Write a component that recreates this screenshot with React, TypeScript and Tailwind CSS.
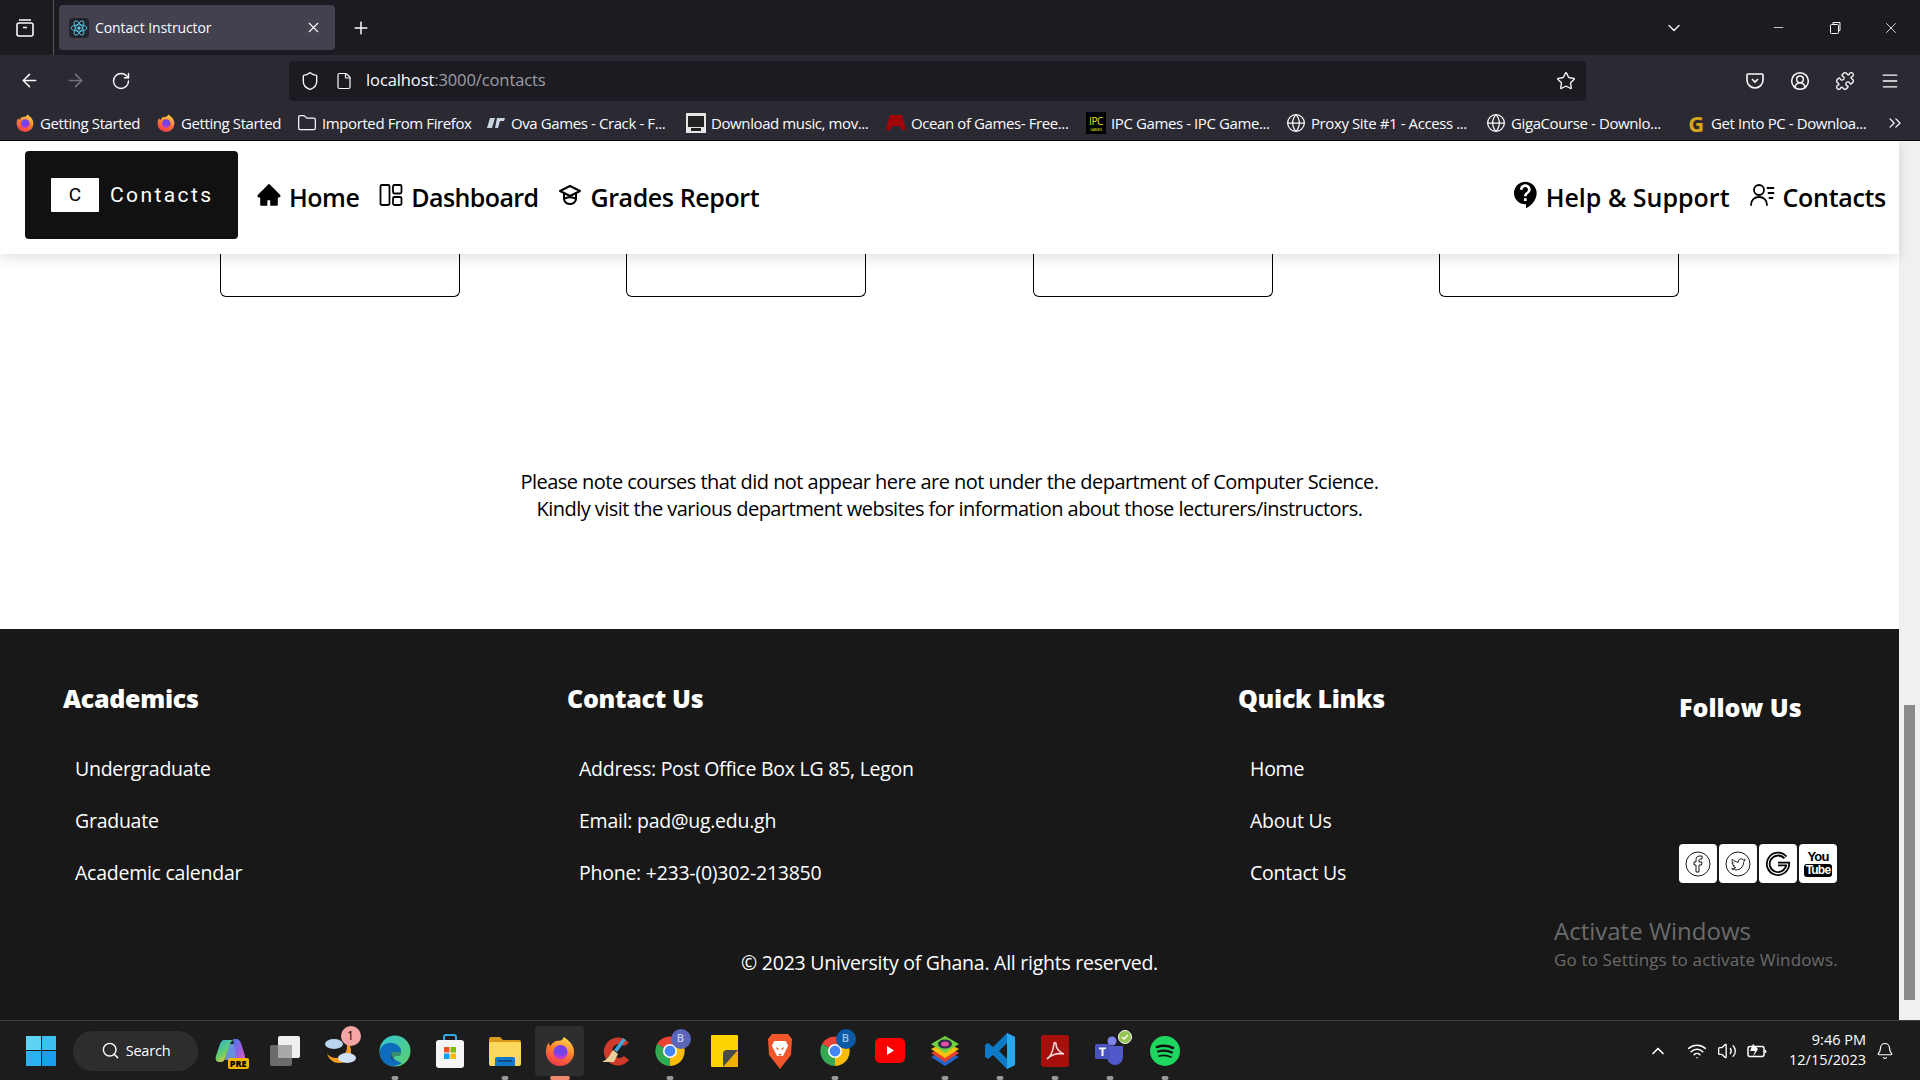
import type { ReactNode } from "react"
import { ArrowLeft, ArrowRight, RotateCw, Shield, File, Star, X, Plus, ChevronDown, Minus, Menu, Folder, Globe, ChevronsRight, Search, ChevronUp, Wifi, Volume2, Bell, Puzzle, CircleUserRound } from "lucide-react"
import { MdContactSupport } from "react-icons/md"
import { AiFillHome } from "react-icons/ai"

const UI_FONT = "font-['Open_Sans',sans-serif]"

function FirefoxIcon({ size = 18 }: { size?: number }) {
  return (
    <svg width={size} height={size} viewBox="0 0 32 32" className="shrink-0">
      <defs>
        <linearGradient id="ffx" x1="0.7" y1="0" x2="0.3" y2="1">
          <stop offset="0" stopColor="#ffd54a" />
          <stop offset="0.5" stopColor="#ff7a2f" />
          <stop offset="1" stopColor="#f0364f" />
        </linearGradient>
      </defs>
      <path d="M20 1c7 4 11 10 11 16a15 15 0 0 1-30 0c0-4 1-7 3-10 0 2 1 3 2 4 1-4 5-6 9-6 2 0 4-1 5-4z" fill="url(#ffx)" />
      <circle cx="16.500" cy="17" r="7.500" fill="#7542e5" />
      <path d="M9 17a7.500 7.500 0 0 0 15 0c-1 3-4 4-7 4s-6-1-8-4z" fill="#c13bd3" />
    </svg>
  )
}

function ReactFavicon() {
  return (
    <svg width="20" height="20" viewBox="0 0 20 20" className="rounded-sm bg-[#20232a]">
      <g fill="none" stroke="#61dafb" strokeWidth="0.8">
        <ellipse cx="10" cy="10" rx="8" ry="3.200" />
        <ellipse cx="10" cy="10" rx="8" ry="3.200" transform="rotate(60 10 10)" />
        <ellipse cx="10" cy="10" rx="8" ry="3.200" transform="rotate(120 10 10)" />
      </g>
      <circle cx="10" cy="10" r="1.600" fill="#61dafb" />
    </svg>
  )
}

function BrowserChrome() {
  const bookmarks: { icon: ReactNode; label: string; cls: string }[] = [
    { icon: <FirefoxIcon />, label: "Getting Started", cls: "w-[141px]" },
    { icon: <FirefoxIcon />, label: "Getting Started", cls: "w-[141px]" },
    { icon: <Folder size={20} strokeWidth={1.5} />, label: "Imported From Firefox", cls: "w-[189px]" },
    {
      icon: (
        <svg width="18" height="10" viewBox="0 0 18 10">
          <path d="M3 0h5L5 10H0zM10 0h8l-1 3h-4l-2 7H8z" fill="#cbd5e1" />
        </svg>
      ),
      label: "Ova Games - Crack - F...",
      cls: "w-[200px]",
    },
    {
      icon: (
        <svg width="20" height="20" viewBox="0 0 20 20">
          <rect width="20" height="20" fill="#e5e5e5" />
          <rect x="2" y="3" width="16" height="11" fill="#222" />
          <rect x="5" y="15" width="10" height="3" fill="#222" />
        </svg>
      ),
      label: "Download music, mov...",
      cls: "w-[200px]",
    },
    {
      icon: (
        <svg width="20" height="16" viewBox="0 0 20 16">
          <path d="M4 0h12l4 14-3 2-4-5H7l-4 5-3-2z" fill="#a1050c" />
        </svg>
      ),
      label: "Ocean of Games- Free...",
      cls: "w-[200px]",
    },
    {
      icon: (
        <div className="flex h-[22px] w-[20px] flex-col items-center justify-center bg-black text-[#e6e600]">
          <span className="text-[10px] leading-[12px]">IPC</span>
          <span className="text-[4px] leading-[5px]">GAMES</span>
        </div>
      ),
      label: "IPC Games - IPC Game...",
      cls: "w-[200px]",
    },
    { icon: <Globe size={20} strokeWidth={1.5} />, label: "Proxy Site #1 - Access ...", cls: "w-[200px]" },
    { icon: <Globe size={20} strokeWidth={1.5} />, label: "GigaCourse - Downlo...", cls: "w-[200px]" },
    { icon: <span className="text-[22px] font-bold leading-none text-[#d9a21b]">G</span>, label: "Get Into PC - Downloa...", cls: "w-[186px]" },
  ]

  return (
    <div className={`${UI_FONT} shrink-0 text-[#fbfbfe]`}>
      {/* tab strip */}
      <div className="flex h-[55px] items-center bg-[#1c1b22]">
        <div className="flex h-full w-[54px] items-center justify-center border-r border-[#55545c] pr-[4px]">
          <svg width="20" height="20" viewBox="0 0 20 20" fill="none" stroke="#fbfbfe" strokeWidth="1.600">
            <rect x="2" y="5" width="16" height="13" rx="2" />
            <path d="M4 2h12M8 9.500h4" />
          </svg>
        </div>
        <div className="ml-[5px] flex h-[45px] w-[276px] items-center rounded-[4px] bg-[#42414d] pl-[10px] pr-[13px]">
          <ReactFavicon />
          <span className="ml-[6px] flex-1 text-[14px] tracking-[-0.1px]">Contact Instructor</span>
          <X size={17} strokeWidth={1.5} />
        </div>
        <Plus size={20} strokeWidth={1.8} className="ml-[16px]" />
        <ChevronDown size={20} strokeWidth={1.5} className="ml-auto mr-[87px]" />
        <Minus size={15} strokeWidth={1.2} className="mr-[42px]" />
        <svg width="14" height="14" viewBox="0 0 14 14" fill="none" stroke="#fbfbfe" className="mr-[40px]">
          <rect x="2.500" y="3.500" width="8" height="9" rx="1" />
          <path d="M5 3.500V1.500h7v8h-1.500" />
        </svg>
        <X size={18} strokeWidth={1.1} className="mr-[20px]" />
      </div>
      {/* toolbar */}
      <div className="flex h-[50px] items-center bg-[#2b2a33] pt-[1px]">
        <div className="flex w-[289px] items-center pl-[19px]">
          <ArrowLeft size={21} strokeWidth={1.7} />
          <ArrowRight size={21} strokeWidth={1.7} className="ml-[25px] text-[#75747c]" />
          <RotateCw size={20} strokeWidth={1.7} className="ml-[25px]" />
        </div>
        <div className="flex h-[40px] w-[1297px] items-center rounded-[4px] bg-[#1c1b22] pl-[11px] pr-[10px]">
          <Shield size={20} strokeWidth={1.6} />
          <File size={18} strokeWidth={1.6} className="ml-[15px]" />
          <span className="ml-[13px] text-[16.500px] tracking-[-0.1px]">
            localhost<span className="text-[#9e9ea3]">:3000/contacts</span>
          </span>
          <Star size={20} strokeWidth={1.6} className="ml-auto" />
        </div>
        <div className="flex flex-1 items-center justify-end gap-[25px] pr-[20px]">
          <svg width="20" height="20" viewBox="0 0 20 20" fill="none" stroke="#fbfbfe" strokeWidth="1.600">
            <path d="M3 3h14a1 1 0 0 1 1 1v5a8 8 0 0 1-16 0V4a1 1 0 0 1 1-1z" />
            <path d="M7 8l3 3 3-3" />
          </svg>
          <CircleUserRound size={20} strokeWidth={1.8} />
          <Puzzle size={20} strokeWidth={1.6} />
          <Menu size={20} strokeWidth={1.6} />
        </div>
      </div>
      {/* bookmarks */}
      <div className="flex h-[35px] items-center bg-[#2b2a33] pl-[15px] pt-[1px] text-[15px] tracking-[-0.4px]">
        {bookmarks.map((b, i) => (
          <div key={i} className={`flex items-center gap-[5px] whitespace-nowrap ${b.cls}`}>
            <span className="flex w-[20px] justify-center">{b.icon}</span>
            <span>{b.label}</span>
          </div>
        ))}
        <ChevronsRight size={20} strokeWidth={1.5} className="ml-auto mr-[15px]" />
      </div>
    </div>
  )
}

function NavItem({ icon, label, cls }: { icon: ReactNode; label: string; cls?: string }) {
  return (
    <a className={`flex items-center text-[25px] font-semibold text-black ${cls ?? ""}`}>
      <span className="mb-[6px] mr-[8px] flex w-[24px] shrink-0 justify-center">{icon}</span>
      {label}
    </a>
  )
}

function Navbar() {
  return (
    <nav className="relative z-10 flex h-[113px] shrink-0 items-center bg-white pl-[25px] pr-[13px] pt-[1px] shadow-[0_4px_12px_rgba(0,0,0,0.12)]">
      <div className="mb-[6px] flex h-[88px] w-[213px] items-start rounded-[4px] bg-[#111111] pl-[26px] pt-[27px]">
        <div className="flex h-[34px] w-[48px] items-center justify-center rounded-[1px] bg-white font-['Roboto',sans-serif] text-[19px] text-black">C</div>
        <span className="ml-[11px] font-['Roboto',sans-serif] text-[21px] leading-[34px] tracking-[2.400px] text-white">Contacts</span>
      </div>
      <div className="ml-[19px] flex items-center gap-[20px]">
        <NavItem icon={<AiFillHome size={26} className="shrink-0" />} label="Home" cls="tracking-[-0.5px]" />
        <NavItem
          icon={
            <svg width="24" height="24" viewBox="0 0 24 24" fill="none" stroke="black" strokeWidth="1.800" className="shrink-0">
              <rect x="1.500" y="2" width="9" height="20" rx="1.500" />
              <rect x="14" y="2" width="8.500" height="8.500" rx="1.500" />
              <rect x="14" y="14" width="8.500" height="8" rx="1.500" />
            </svg>
          }
          label="Dashboard"
          cls="tracking-[-0.6px]"
        />
        <NavItem
          icon={
            <svg width="24" height="24" viewBox="0 0 24 24" fill="none" stroke="black" strokeWidth="2" strokeLinejoin="round" className="shrink-0">
              <path d="M12 3L2 8l10 5 10-5z" />
              <path d="M6 10.500V16c0 3 3 5 6 5s6-2 6-5v-5.500" />
              <path d="M7 15.500c3-1.500 7-1.500 10 0" />
            </svg>
          }
          label="Grades Report"
          cls="tracking-[-0.4px]"
        />
      </div>
      <div className="ml-auto flex items-center gap-[21px]">
        <NavItem icon={<MdContactSupport size={32} className="shrink-0" />} label="Help & Support" />
        <NavItem
          icon={
            <svg width="25" height="25" viewBox="0 0 25 25" fill="none" stroke="black" strokeWidth="1.800" strokeLinecap="round" className="shrink-0">
              <circle cx="9" cy="7" r="5" />
              <path d="M1 22c0-5 3.500-8 8-8s8 3 8 8" />
              <path d="M17.500 5h6M18.500 10h5M19.500 15h3" />
            </svg>
          }
          label="Contacts"
          cls="tracking-[-0.3px]"
        />
      </div>
    </nav>
  )
}

function FooterColumn({ title, items }: { title: string; items: string[] }) {
  return (
    <div>
      <h3 className="text-[25px] font-extrabold leading-[32px] tracking-[-0.3px] text-white">{title}</h3>
      <ul className="mt-[41px] flex flex-col gap-[24px] pl-[12px]">
        {items.map((item) => (
          <li key={item} className="text-[19.500px] leading-[28px] tracking-[-0.250px] text-white">
            {item}
          </li>
        ))}
      </ul>
    </div>
  )
}

function SocialBox({ children }: { children: ReactNode }) {
  return <div className="flex h-[39px] w-[38px] items-center justify-center rounded-[4px] bg-white text-black">{children}</div>
}

function Footer() {
  return (
    <footer className="relative h-[391px] shrink-0 bg-[#181818] pl-[63px] pt-[53px]">
      <div className="grid grid-cols-[504px_671px_441px_auto]">
        <FooterColumn title="Academics" items={["Undergraduate", "Graduate", "Academic calendar"]} />
        <FooterColumn title="Contact Us" items={["Address: Post Office Box LG 85, Legon", "Email: pad@ug.edu.gh", "Phone: +233-(0)302-213850"]} />
        <FooterColumn title="Quick Links" items={["Home", "About Us", "Contact Us"]} />
        <div className="pt-[9px]">
          <h3 className="text-[25px] font-extrabold leading-[32px] text-white">Follow Us</h3>
          <div className="mt-[121px] flex gap-[2px]">
            <SocialBox>
              <svg width="26" height="26" viewBox="0 0 26 26" fill="none" stroke="black" strokeWidth="0.900">
                <circle cx="13" cy="13" r="12" />
                <path d="M11 21v-7H9v-3h2V9c0-2.500 1-4 3.500-4H17v3h-1.500c-1 0-1.500.5-1.500 1.500V11h3l-.5 3H14v7z" />
              </svg>
            </SocialBox>
            <SocialBox>
              <svg width="26" height="26" viewBox="0 0 26 26" fill="none" stroke="black" strokeWidth="0.900">
                <circle cx="13" cy="13" r="12" />
                <path d="M20 8.500c-.6.300-1.200.400-1.800.500-.6-.9-1.600-1.300-2.700-1.100-1.500.3-2.400 1.800-2.100 3.300-2.400-.1-4.500-1.200-5.900-3-.8 1.300-.4 3 .9 3.900-.5 0-.9-.1-1.300-.4 0 1.400 1 2.600 2.300 2.900-.4.100-.9.100-1.300 0 .4 1.200 1.500 2 2.700 2-1.200.9-2.700 1.300-4.100 1.100 4.800 3 11.300.5 12-6.100 0-.3 0-.5 0-.7.500-.4.900-1 1.300-1.900z" />
              </svg>
            </SocialBox>
            <SocialBox>
              <svg width="26" height="26" viewBox="0 0 28 28" fill="none" strokeLinecap="butt">
                <path d="M22 7a10.500 10.500 0 1 0 2.500 7H14" stroke="black" strokeWidth="5" />
                <path d="M22 7a10.500 10.500 0 1 0 2.500 7H14" stroke="white" strokeWidth="1.200" />
              </svg>
            </SocialBox>
            <SocialBox>
              <div className="flex flex-col items-center font-['Liberation_Sans',sans-serif] font-bold">
                <span className="text-[13px] leading-[13px] tracking-[-0.8px] text-black">You</span>
                <span className="mt-[1px] rounded-[3px] bg-black px-[2px] text-[12px] leading-[13px] tracking-[-0.8px] text-white">Tube</span>
              </div>
            </SocialBox>
          </div>
        </div>
      </div>
      <p className="mt-[62px] pr-[63px] text-center text-[19.500px] leading-[28px] tracking-[-0.250px] text-white">© 2023 University of Ghana. All rights reserved.</p>
      {/* watermark sits over the footer */}
      <div className="absolute left-[1554px] top-[286px] text-[#6b6b6b]">
        <div className="text-[24px] leading-[32px]">Activate Windows</div>
        <div className="mt-[2px] text-[17px] leading-[22px] tracking-[0.15px]">Go to Settings to activate Windows.</div>
      </div>
    </footer>
  )
}

function Card() {
  return <div className="h-[43px] w-[240px] rounded-b-[6px] border border-t-0 border-black" />
}

function TaskIcon({ children, dot, active }: { children: ReactNode; dot?: boolean; active?: boolean }) {
  return (
    <div className="relative flex h-[60px] w-[55px] items-center justify-center">
      {active && <div className="absolute inset-x-[3px] top-[5px] h-[50px] rounded-[4px] bg-[#2e2e2e]" />}
      <div className="relative">{children}</div>
      {dot && <div className="absolute bottom-[1px] left-1/2 h-[4px] w-[7px] -translate-x-1/2 rounded-full bg-[#9a9a9a]" />}
      {active && <div className="absolute bottom-[1px] left-1/2 h-[4px] w-[20px] -translate-x-1/2 rounded-full bg-[#f08a6e]" />}
    </div>
  )
}

function ChromeIcon({ badge }: { badge: string }) {
  return (
    <div className="relative">
      <svg width="30" height="30" viewBox="0 0 30 30">
        <path d="M15 15L2 8A15 15 0 0 1 28 8z" fill="#ea4335" />
        <path d="M15 15L2 8A15 15 0 0 0 15 30z" fill="#34a853" />
        <path d="M15 15L28 8A15 15 0 0 1 15 30z" fill="#fbbc05" />
        <circle cx="15" cy="15" r="7" fill="white" />
        <circle cx="15" cy="15" r="5.400" fill="#4285f4" />
      </svg>
      <div className={`absolute -right-[6px] -top-[7px] flex h-[20px] w-[20px] items-center justify-center rounded-full text-[11px] font-semibold ${badge}`}>B</div>
    </div>
  )
}

function Taskbar() {
  return (
    <div className={`${UI_FONT} flex h-[60px] shrink-0 items-center border-t border-[#3d3d3d] bg-[#1c1c1c] text-white`}>
      <div className="ml-[26px] grid h-[30px] w-[30px] grid-cols-2 gap-[1px]">
        <div className="bg-[#5fd3f5]" />
        <div className="bg-[#3cc0f2]" />
        <div className="bg-[#2bb2f0]" />
        <div className="bg-[#1a9ff0]" />
      </div>
      <div className="ml-[17px] flex h-[40px] w-[125px] items-center justify-center gap-[6px] rounded-full bg-[#2d2d2d] text-[14.500px] tracking-[-0.2px]">
        <Search size={19} strokeWidth={1.8} />
        Search
      </div>
      <div className="ml-[4px] flex">
        <TaskIcon>
          <div className="relative">
            <svg width="30" height="26" viewBox="0 0 30 26">
              <defs>
                <linearGradient id="cpl" x1="0" y1="0" x2="0.6" y2="1">
                  <stop offset="0" stopColor="#2fb0e8" />
                  <stop offset="0.6" stopColor="#5fcf6a" />
                  <stop offset="1" stopColor="#f4c542" />
                </linearGradient>
                <linearGradient id="cpr" x1="0" y1="0" x2="1" y2="1">
                  <stop offset="0" stopColor="#3b7de8" />
                  <stop offset="0.5" stopColor="#9a5fe0" />
                  <stop offset="1" stopColor="#e85fb0" />
                </linearGradient>
              </defs>
              <path d="M14 6h8l4 16H10z" fill="#6a8fe0" />
              <path d="M18 1h3c3 0 4 2 5 4l4 13c1 3-1 6-4 6h-7c2 0 3-2 2-5z" fill="url(#cpr)" />
              <path d="M9 2h10c-2 0-3 2-4 4l-5 15c-1 2-2 3-4 3H4c-3 0-4-3-3-6L5 6c1-2 2-4 4-4z" fill="url(#cpl)" />
            </svg>
            <span className="absolute -bottom-[5px] right-[-4px] rounded-[2px] bg-[#f5b400] px-[2px] text-[9px] font-extrabold leading-[11px] text-black">PRE</span>
          </div>
        </TaskIcon>
        <TaskIcon>
          <svg width="30" height="30" viewBox="0 0 30 30">
            <rect x="0" y="9" width="22" height="21" rx="2" fill="#6b6b6b" />
            <rect x="8" y="0" width="22" height="22" rx="2" fill="#efefef" />
            <rect x="8" y="9" width="14" height="13" fill="#a9a9a9" />
          </svg>
        </TaskIcon>
        <TaskIcon>
          <div className="relative">
            <svg width="32" height="32" viewBox="0 0 32 32">
              <circle cx="15" cy="16" r="12" fill="#f59a23" />
              <circle cx="12" cy="12" r="11" fill="#1c1c1c" />
              <ellipse cx="10" cy="9" rx="9" ry="5" fill="#b8d4ee" />
              <ellipse cx="23" cy="23" rx="9" ry="5" fill="#cfe2f5" />
            </svg>
            <div className="absolute -right-[5px] -top-[9px] flex h-[20px] w-[20px] items-center justify-center rounded-full bg-[#f5a5a5] text-[12px] text-black">1</div>
          </div>
        </TaskIcon>
        <TaskIcon dot>
          <svg width="32" height="32" viewBox="0 0 32 32">
            <defs>
              <linearGradient id="edge" x1="0" y1="0" x2="1" y2="1">
                <stop offset="0" stopColor="#31c5d6" />
                <stop offset="1" stopColor="#5fd068" />
              </linearGradient>
            </defs>
            <circle cx="16" cy="16" r="15.500" fill="url(#edge)" />
            <path d="M1 16c1-6 7-9 12-8 6 1 10 5 9 9H12c0 6 5 9 11 11-3 2-6 3-9 3C6 31 0 24 1 16z" fill="#0f6cbd" />
            <path d="M12 17h10c1 2-1 4-3 4-3 0-6 1-4 6-3-2-4-6-3-10z" fill="#1c1c1c" opacity=".35" />
          </svg>
        </TaskIcon>
        <TaskIcon>
          <svg width="30" height="34" viewBox="0 0 30 34">
            <path d="M9 6V3a2 2 0 0 1 2-2h8a2 2 0 0 1 2 2v3" fill="none" stroke="#2ba9e0" strokeWidth="2" />
            <rect x="1" y="6" width="28" height="28" rx="3" fill="#f5f5f5" />
            <rect x="9" y="13" width="5.500" height="5.500" fill="#f25022" />
            <rect x="15.500" y="13" width="5.500" height="5.500" fill="#7fba00" />
            <rect x="9" y="19.500" width="5.500" height="5.500" fill="#00a4ef" />
            <rect x="15.500" y="19.500" width="5.500" height="5.500" fill="#ffb900" />
          </svg>
        </TaskIcon>
        <TaskIcon dot>
          <svg width="32" height="30" viewBox="0 0 32 30">
            <path d="M0 3a2 2 0 0 1 2-2h9l3 3h16a2 2 0 0 1 2 2v4H0z" fill="#d99a1c" />
            <rect x="0" y="6" width="32" height="24" rx="2" fill="#fbd75b" />
            <path d="M6 30v-7a2 2 0 0 1 2-2h16a2 2 0 0 1 2 2v7z" fill="#0f78c8" />
            <rect x="9" y="24" width="14" height="2" fill="#0a4d86" />
          </svg>
        </TaskIcon>
        <TaskIcon active>
          <FirefoxIcon size={30} />
        </TaskIcon>
        <TaskIcon>
          <svg width="32" height="32" viewBox="0 0 32 32">
            <path d="M30 8A14 14 0 1 0 30 25l-5-4a7 7 0 1 1 0-10z" fill="#cf3a2a" />
            <path d="M24 3l3 2-9 12-3-2z" fill="#3da5d9" />
            <path d="M14 15l5 4-4 8H3c5-2 8-7 11-12z" fill="#e8cf9a" />
          </svg>
        </TaskIcon>
        <TaskIcon dot>
          <ChromeIcon badge="bg-[#5c66b8] text-[#c9cdf0]" />
        </TaskIcon>
        <TaskIcon>
          <svg width="27" height="32" viewBox="0 0 27 32">
            <rect width="27" height="32" rx="1" fill="#ffd400" />
            <path d="M27 15v15a2 2 0 0 1-2 2H12z" fill="#f0b000" />
            <path d="M27 15L12 32V19a4 4 0 0 1 4-4z" fill="#4a4a4a" />
          </svg>
        </TaskIcon>
        <TaskIcon>
          <svg width="26" height="36" viewBox="0 0 26 36">
            <path d="M5 1h16l4 5-1 16-11 14L2 22 1 6z" fill="#f1562b" />
            <path d="M7 8h12l2 5-3 6-2 4h-6l-2-4-3-6z" fill="#fff" />
            <path d="M9 14l3 2-2 1zM17 14l-3 2 2 1zM11 21h4l-2 2z" fill="#f1562b" />
          </svg>
        </TaskIcon>
        <TaskIcon dot>
          <ChromeIcon badge="bg-[#0b5aa6] text-[#9cc7ee]" />
        </TaskIcon>
        <TaskIcon>
          <svg width="30" height="25" viewBox="0 0 30 25">
            <rect width="30" height="25" rx="5" fill="#ff0000" />
            <path d="M12 8l7 4.500-7 4.500z" fill="#fff" />
          </svg>
        </TaskIcon>
        <TaskIcon dot>
          <svg width="30" height="32" viewBox="0 0 30 32">
            <path d="M1 22l14-7 14 7-14 9z" fill="#2463c9" />
            <path d="M1 18l14-7 14 7-14 9z" fill="#e8402f" />
            <path d="M1 14l14-7 14 7-14 9z" fill="#f4c20d" />
            <path d="M1 9l14-8 14 8-14 9z" fill="#6fcf3f" />
            <ellipse cx="15" cy="9" rx="7" ry="4.500" fill="#2b2b4f" />
            <ellipse cx="15" cy="9" rx="4" ry="2.500" fill="#e44fa3" />
          </svg>
        </TaskIcon>
        <TaskIcon dot>
          <svg width="30" height="36" viewBox="0 0 30 36">
            <path d="M22 0l8 4v28l-8 4L8 22l-5 4-3-2V12l3-2 5 4z" fill="#0e7ac6" />
            <path d="M22 0l8 4v28l-8 4z" fill="#2aa6ef" />
            <path d="M22 10l-8 8 8 8z" fill="#1c1c1c" />
          </svg>
        </TaskIcon>
        <TaskIcon dot>
          <svg width="28" height="32" viewBox="0 0 28 32">
            <rect width="28" height="32" rx="3" fill="#a60f0c" />
            <path d="M6 24c3-2 6-8 7-15 0-2 2-2 2 0 0 5 3 8 8 10-6-1-12 0-17 5z" fill="none" stroke="#f3d6d4" strokeWidth="1.600" />
          </svg>
        </TaskIcon>
        <TaskIcon dot>
          <div className="relative">
            <svg width="30" height="30" viewBox="0 0 30 30">
              <circle cx="17" cy="5" r="4.500" fill="#7b83eb" />
              <path d="M10 10h18v11a8 8 0 0 1-16 0z" fill="#5059c9" />
              <rect x="0" y="8" width="15" height="15" rx="1.500" fill="#4b53bc" />
              <path d="M4 11.500h7v1.800H8.500V20h-2v-6.700H4z" fill="#fff" />
            </svg>
            <svg width="14" height="14" viewBox="0 0 14 14" className="absolute -right-[7px] -top-[6px]">
              <circle cx="7" cy="7" r="6.500" fill="#92c353" stroke="#fff" />
              <path d="M4 7l2 2 4-4" fill="none" stroke="#fff" strokeWidth="1.500" />
            </svg>
          </div>
        </TaskIcon>
        <TaskIcon dot>
          <svg width="30" height="30" viewBox="0 0 30 30">
            <circle cx="15" cy="15" r="15" fill="#1ed760" />
            <g fill="none" stroke="#111" strokeLinecap="round">
              <path d="M7 11c6-2 11-1.500 16 1" strokeWidth="2.600" />
              <path d="M8 15.500c5-1.500 10-1 14 1" strokeWidth="2.200" />
              <path d="M9 20c4-1 8-.8 12 1" strokeWidth="1.800" />
            </g>
          </svg>
        </TaskIcon>
      </div>
      <div className="ml-auto flex items-center">
        <ChevronUp size={20} strokeWidth={2} className="mr-[19px]" />
        <Wifi size={20} strokeWidth={1.8} className="mr-[10px]" />
        <Volume2 size={20} strokeWidth={1.6} className="mr-[10px]" />
        <svg width="20" height="16" viewBox="0 0 20 16" fill="none" stroke="white" strokeWidth="1.500" className="mr-[5px]">
          <rect x="1" y="3.500" width="16" height="10" rx="2" />
          <path d="M18.500 7v3" />
          <path d="M6 1L3 8h5l-2 6 5-8" fill="white" stroke="none" />
        </svg>
        <div className="mb-[2px] w-[94px] text-right text-[14.500px] leading-[20px]">
          <div>9:46 PM</div>
          <div>12/15/2023</div>
        </div>
        <Bell size={18} strokeWidth={1.6} className="ml-[10px] mr-[26px]" />
      </div>
    </div>
  )
}

export default function App() {
  return (
    <div className={`${UI_FONT} flex h-[1080px] w-[1920px] flex-col overflow-hidden bg-black`}>
      <BrowserChrome />
      <div className="h-px shrink-0 bg-black" />
      <div className="flex h-[879px] shrink-0">
        <div className="flex w-[1899px] flex-col bg-white">
          <Navbar />
          <div className="flex gap-[166.300px] pl-[220px]">
            <Card />
            <Card />
            <Card />
            <Card />
          </div>
          <div className="flex flex-1 flex-col items-center pt-[171px] text-[20px] leading-[27px] tracking-[-0.540px] text-black">
            <p>Please note courses that did not appear here are not under the department of Computer Science.</p>
            <p>Kindly visit the various department websites for information about those lecturers/instructors.</p>
          </div>
          <Footer />
        </div>
        {/* scrollbar */}
        <div className="flex w-[21px] flex-col bg-[#f0f0f0] pl-[5px] pt-[564px]">
          <div className="h-[295px] w-[11px] bg-[#8a8a8a]" />
        </div>
      </div>
      <Taskbar />
    </div>
  )
}
